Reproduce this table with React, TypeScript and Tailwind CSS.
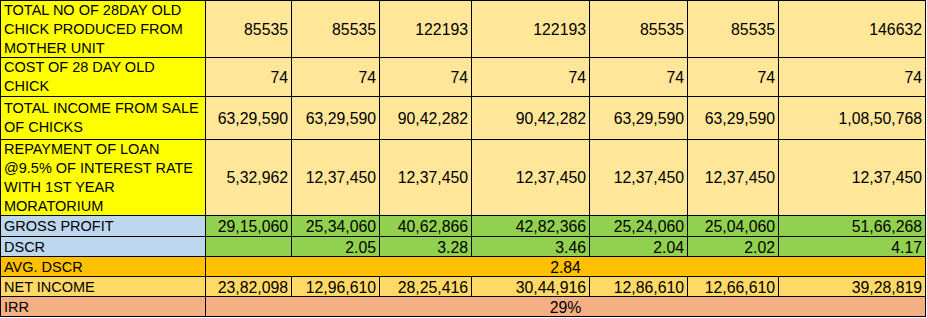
import React from "react";

type Cell = { t: string; bg: string; span?: boolean; center?: boolean };

const PEACH = "bg-[#FFE699]";
const YEL = "bg-[#FFFF00]";
const BLUE = "bg-[#BDD7EE]";
const GREEN = "bg-[#92D050]";
const ORANGE = "bg-[#FFC000]";
const GOLD = "bg-[#FFD966]";
const SALMON = "bg-[#F4B084]";

const rows: { label: string; labelBg: string; single?: boolean; cells: Cell[] }[] = [
  {
    label: "TOTAL NO OF 28DAY OLD CHICK PRODUCED FROM MOTHER UNIT",
    labelBg: YEL,
    cells: ["85535", "85535", "122193", "122193", "85535", "85535", "146632"].map((t) => ({ t, bg: PEACH })),
  },
  {
    label: "COST OF 28 DAY OLD CHICK",
    labelBg: YEL,
    cells: ["74", "74", "74", "74", "74", "74", "74"].map((t) => ({ t, bg: PEACH })),
  },
  {
    label: "TOTAL INCOME FROM SALE OF CHICKS",
    labelBg: YEL,
    cells: ["63,29,590", "63,29,590", "90,42,282", "90,42,282", "63,29,590", "63,29,590", "1,08,50,768"].map((t) => ({ t, bg: PEACH })),
  },
  {
    label: "REPAYMENT OF LOAN @9.5% OF INTEREST RATE WITH 1ST YEAR MORATORIUM",
    labelBg: YEL,
    cells: ["5,32,962", "12,37,450", "12,37,450", "12,37,450", "12,37,450", "12,37,450", "12,37,450"].map((t) => ({ t, bg: PEACH })),
  },
  {
    label: "GROSS PROFIT",
    labelBg: BLUE,
    single: true,
    cells: ["29,15,060", "25,34,060", "40,62,866", "42,82,366", "25,24,060", "25,04,060", "51,66,268"].map((t) => ({ t, bg: GREEN })),
  },
  {
    label: "DSCR",
    labelBg: BLUE,
    single: true,
    cells: ["", "2.05", "3.28", "3.46", "2.04", "2.02", "4.17"].map((t) => ({ t, bg: GREEN })),
  },
  {
    label: "AVG. DSCR",
    labelBg: ORANGE,
    single: true,
    cells: [{ t: "2.84", bg: ORANGE, span: true, center: true }],
  },
  {
    label: "NET INCOME",
    labelBg: GOLD,
    single: true,
    cells: ["23,82,098", "12,96,610", "28,25,416", "30,44,916", "12,86,610", "12,66,610", "39,28,819"].map((t) => ({ t, bg: GOLD })),
  },
  {
    label: "IRR",
    labelBg: SALMON,
    single: true,
    cells: [{ t: "29%", bg: SALMON, span: true, center: true }],
  },
];

export default function App() {
  return (
    <div
      className="bg-white w-[927px] h-[318px] text-black"
      style={{ fontFamily: "'Liberation Sans', Arial, sans-serif" }}
    >
      <div className="grid w-fit bg-black p-px gap-px grid-cols-[204px_85px_87px_91px_117px_97px_90px_146px] grid-rows-[56px_38px_42px_75px_20px_19px_19px_19px_19px]">
        {rows.map((r, i) => (
          <React.Fragment key={i}>
            <div
              className={`${r.labelBg} flex items-center pl-[3px] pr-[2px] text-[14.5px] leading-[19px] ${
                r.single ? "pt-px" : ""
              }`}
            >
              <span>{r.label}</span>
            </div>
            {r.cells.map((c, j) => (
              <div
                key={j}
                className={`${c.bg} flex items-center ${c.span ? "col-span-7" : ""} ${
                  c.center ? "justify-center" : "justify-end pr-[3px]"
                } ${r.single ? "pt-px" : ""} text-[15.8px] leading-[19px] whitespace-nowrap`}
              >
                {c.t}
              </div>
            ))}
          </React.Fragment>
        ))}
      </div>
    </div>
  );
}
